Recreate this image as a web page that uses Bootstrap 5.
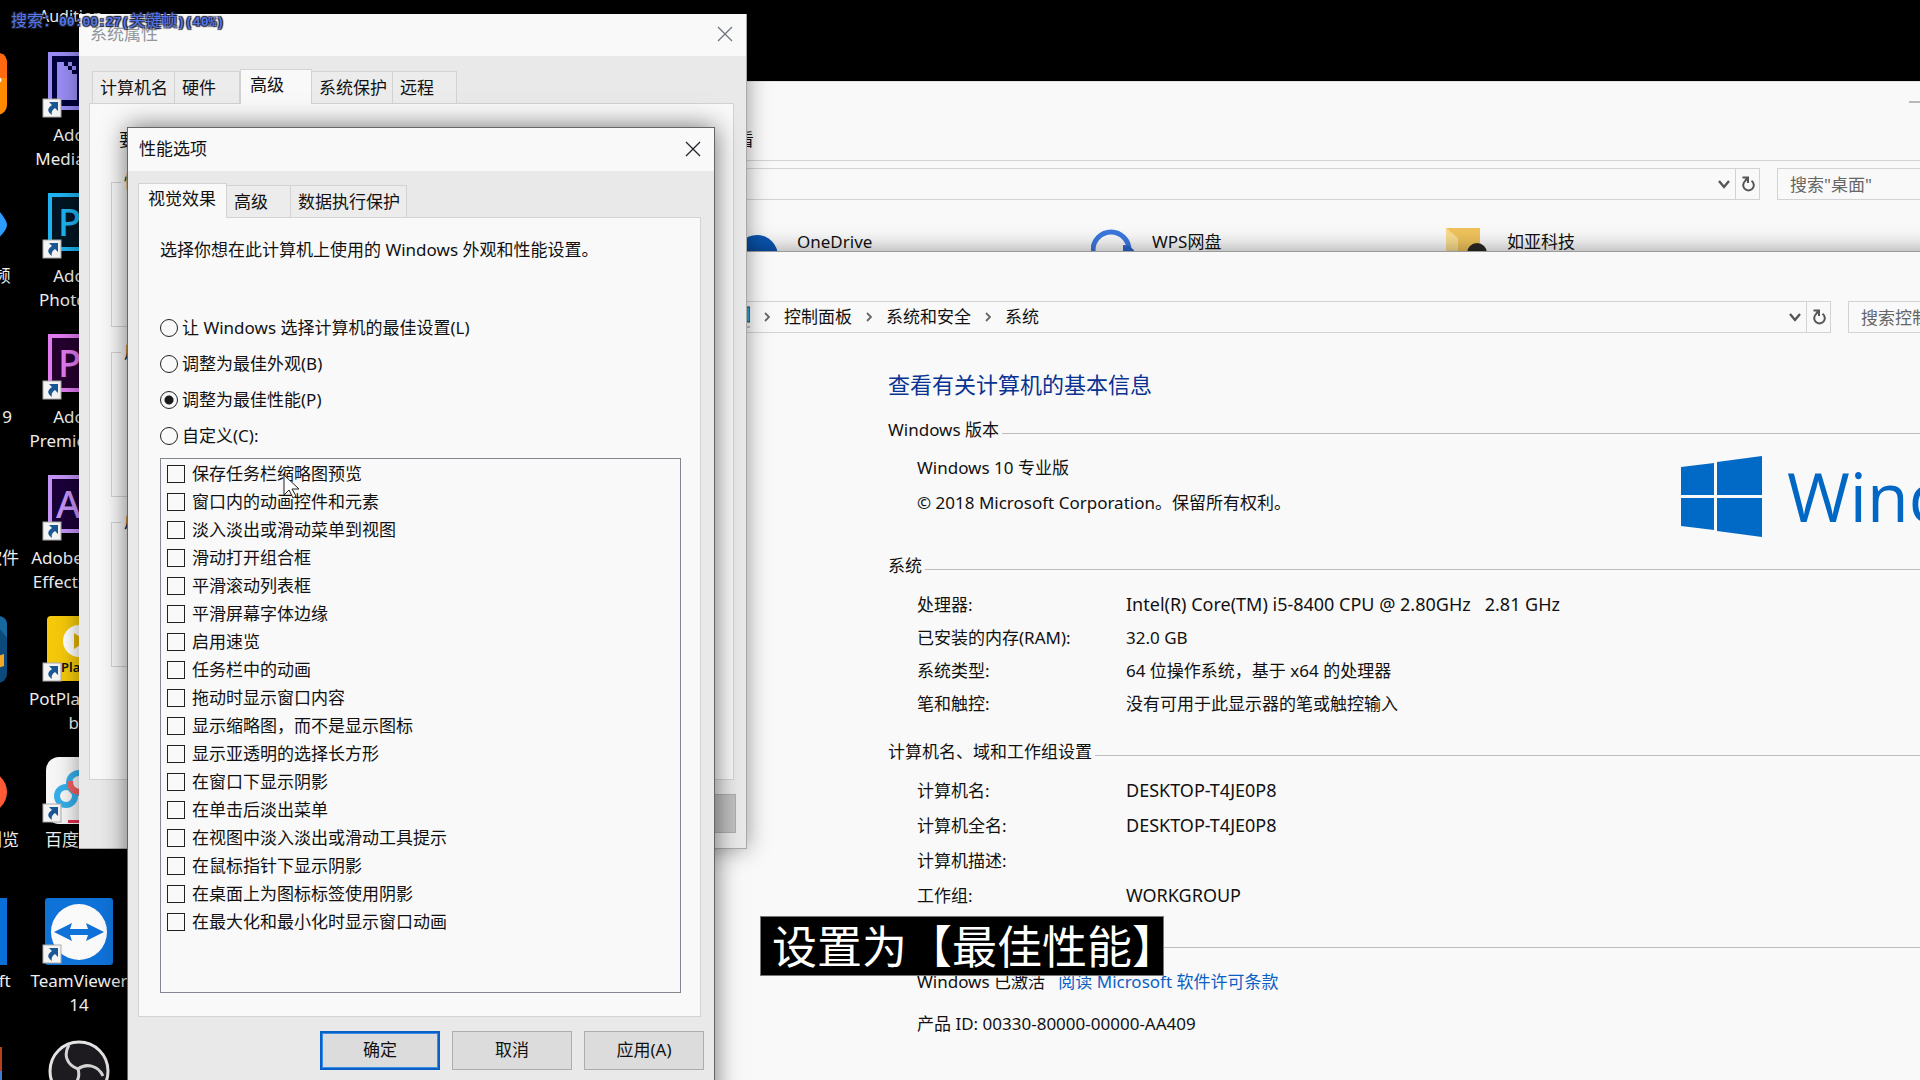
<!DOCTYPE html>
<html lang="zh-CN">
<head>
<meta charset="utf-8">
<meta name="viewport" content="width=device-width, initial-scale=1">
<title>性能选项</title>
<link href="https://cdn.jsdelivr.net/npm/bootstrap@5.3.0/dist/css/bootstrap.min.css" rel="stylesheet">
<style>
:root { --paper:#f9f9f9; --face:#e9e9e9; --edge:#d3d3d3; }
body { background:#000; color:#111; font-family:"Noto Sans","Noto Sans CJK SC",sans-serif; font-size:16px; line-height:24px; }
.cn { font-size:17px; }
.desktop { height:100vh; min-height:1080px; background:#000; }
.desktop svg { display:block; }
.win { position:absolute; background:var(--paper); box-shadow:0 0 22px rgba(0,0,0,.4); }
.win-explorer { left:560px; right:-120px; top:81px; height:220px; border-top:1px solid #e4e4e4; }
.win-system { left:560px; right:-120px; top:251px; bottom:-20px; border-top:1px solid #9a9a9a; }
.win-props { left:79px; top:14px; width:668px; height:835px; background:var(--face); border-right:1px solid #aaa; border-bottom:1px solid #aaa; }
.win-perf { left:127px; top:127px; width:588px; height:980px; background:var(--face); border:1px solid #666; box-shadow:0 0 24px rgba(0,0,0,.55); }
.titlebar { height:42px; background:var(--paper); padding:0 13px 2px 11px; }
.win-perf .titlebar { height:43px; }
.win button, .win input { font-family:inherit; }
.btn-x { border:0; background:none; padding:0; line-height:0; }

/* explorer chrome */
.ribbon { height:79px; border-bottom:1px solid var(--edge); padding:19px 117px 0 177px; }
.ribbon span { margin-top:27px; }
.addr { height:32px; border:1px solid var(--edge); }
.addr-tail { width:24px; border-left:1px solid var(--edge); height:30px; }
.addr-search { height:32px; border:1px solid var(--edge); background:var(--paper); border-radius:0; padding:0 12px; color:#666; font-size:17px; outline:0; }
.search-desktop { width:263px; }
.search-panel { width:192px; }
.addr-search::placeholder { color:#666; opacity:1; }
.addr-row { gap:17px; margin-top:7px; }
.win-system .addr-row { margin-top:49px; }
.drives { margin-top:28px; padding-left:176px; line-height:28px; }
.drive { width:355px; height:56px; gap:18px; }
.drive svg { flex:none; }
.crumbs { padding-left:169px; gap:14px; }

/* system page */
.info { padding:36px 0 0 328px; }
.info h1 { font-size:22px; line-height:30px; color:#0a3391; margin:0 0 19px; font-weight:400; }
.info p { margin:0; padding-left:29px; }
.sect { display:flex; align-items:center; gap:3px; height:24px; }
.sect::after { content:""; flex:1; height:1px; background:#bdbdbd; margin-top:7px; }
.edition { display:grid; gap:11px; margin:14px 0 39px; }
.activation { display:grid; gap:18px; margin-top:14px; }
.facts { padding-left:29px; display:grid; grid-template-columns:209px 1fr; }
.facts dt, .facts dd { font-weight:400; margin:0; }
.facts .latin { font-size:18px; }
.facts-a { grid-auto-rows:33px; line-height:33px; margin:10px 0 20px; }
.facts-b { grid-auto-rows:35px; line-height:35px; margin:9px 0 19px; }
.brand { position:absolute; left:1121px; top:204px; color:#0067c5; gap:25px; font-family:"Open Sans",sans-serif; font-size:68px; line-height:78px; white-space:nowrap; }
.brand span { height:80px; }
.info a { color:#0a5fc4; text-decoration:none; }

/* property sheets */
.tabs { flex-wrap:nowrap; align-items:flex-end; padding:13px 0 0 13px; }
.win-perf .tabs { padding:12px 0 0 10px; }
.tabs button { border:1px solid var(--edge); border-left-width:0; border-bottom:0; background:#ececec; font-size:17px; line-height:24px; padding:4px 0 3px 7px; text-align:left; color:#111; }
.tabs button:first-child { border-left-width:1px; }
.tabs button.on { background:var(--paper); border-left-width:1px; padding:3px 0 7px 9px; margin-bottom:-1px; position:relative; }
.sheet { background:var(--paper); border:1px solid var(--edge); }
.props-sheet { margin:0 12px 0 10px; height:677px; padding:24px 21px 0; }
.props-sheet p { margin:0 0 18px 8px; white-space:nowrap; overflow:hidden; }
.props-sheet fieldset { border:1px solid var(--edge); height:157px; margin:0 0 13px; }
.props-sheet legend { float:none; width:auto; font-size:17px; line-height:24px; padding:0 3px; margin:0 0 0 9px; }
.perf-sheet { margin:0 13px 0 10px; padding:20px 19px 23px 21px; }
.dlg-btns { gap:12px; padding:14px 10px 0 0; }
.dlg-btn { width:120px; height:39px; border:1px solid #adadad; border-radius:0; background:#dcdcdc; color:#111; font-size:17px; line-height:24px; padding:0 0 2px; }
.dlg-btn:disabled { background:#c0c0c0; color:#777; }
.dlg-btn.primary { border:2px solid #0a5fc4; box-shadow:inset 0 0 0 1px #3a8fe8; }
.opt { display:flex; align-items:center; gap:4px; height:36px; font-size:17px; margin:0; }
.opt input, .tick input { appearance:none; flex:none; width:18px; height:18px; margin:0; border:1px solid #222; background:var(--paper); }
.opt input { border-radius:50%; }
.opt input:checked { background:radial-gradient(circle,#1b1b1b 0 4px,var(--paper) 5px); }
.ticks { border:1px solid #828790; height:535px; padding:1px 0 0 6px; margin:4px 0 0; }
.tick { display:flex; align-items:center; gap:7px; height:28px; font-size:17px; margin:0; }

/* desktop shortcuts */
.shortcuts { position:absolute; left:29px; top:52px; width:100px; }
.shortcuts a, .shortcuts-edge a { display:block; height:141px; color:#eee; text-decoration:none; text-align:center; white-space:nowrap; line-height:24px; }
.shortcuts a svg { margin:0 0 4px 16px; }
.shortcuts-edge { position:absolute; left:-65px; top:52px; width:100px; }
.shortcuts-edge a svg { margin:0 0 4px 5px; }
.top-label { position:absolute; left:39px; top:4px; color:#eee; }
.osd { position:absolute; left:11px; top:7px; z-index:5; font:400 16px/24px "Noto Sans CJK SC",sans-serif; color:#5578ea; text-shadow:-1px -1px 1px #223,1px -1px 1px #223,-1px 1px 1px #223,1px 1px 1px #223; white-space:nowrap; }
.osd span { font-family:"Liberation Mono",monospace; font-size:13px; font-weight:700; }
.subtitle { position:absolute; left:760px; top:916px; width:404px; height:60px; border:1px solid #777; background:#000; color:#fff; font-size:45px; line-height:60px; padding-left:11px; white-space:nowrap; overflow:hidden; margin:0; z-index:4; }
.pointer { position:absolute; left:283px; top:471px; z-index:5; }
</style>
<script src="https://cdn.jsdelivr.net/npm/bootstrap@5.3.0/dist/js/bootstrap.bundle.min.js"></script>
</head>
<body>
<svg width="0" height="0" class="position-absolute" aria-hidden="true">
  <defs>
    <g id="lnk"><rect x="-2" y="47" width="18" height="18" fill="#f4f4f4" stroke="#aaa"/><path d="M4 50h9v9l-3-3c-3 2-4 4-3 7-5-3-5-7 0-10z" fill="#1c5795"/></g>
    <path id="cross" d="M1 1l14 14M15 1L1 15" stroke="currentColor" stroke-width="1.3" fill="none"/>
    <path id="down" d="M1 1l5 6 5-6" stroke="#555" stroke-width="2.4" fill="none"/>
    <path id="reload" d="M10.500 4.800A5.300 5.300 0 1 1 4.500 4.800M1.500 1.500h5.500v5.500M7 1.500L4 5" stroke="#555" stroke-width="2" fill="none"/>
    <path id="chev" d="M1 1l4 4-4 4" stroke="#666" stroke-width="1.8" fill="none"/>
  </defs>
</svg>
<main class="desktop position-relative overflow-hidden">

  <div class="top-label">Audition</div>
  <nav class="shortcuts-edge cn" aria-label="桌面左列">
    <a href="#"><svg width="67" height="67"><rect y="1" width="67" height="62" rx="10" fill="#ff8a00"/><path d="M0 1h57q10 0 10 10v15H0z" fill="#ff6a10"/><circle cx="59" cy="28" r="2.500" fill="#fff"/></svg></a>
    <a href="#"><svg width="67" height="67"><path d="M40 12h14q13 14 13 20t-13 17H40z" fill="#2e9bff"/></svg>看视频</a>
    <a href="#"><svg width="67" height="67"></svg>C 2019</a>
    <a href="#"><svg width="67" height="67"></svg>办公软件</a>
    <a href="#"><svg width="67" height="67"><rect width="67" height="67" rx="9" fill="#0c4a7c"/><path d="M50 0l17 22V9q0-9-9-9z" fill="#17689f"/><path d="M50 42l14-4v12l-14 4z" fill="#f5a623"/></svg></a>
    <a href="#"><svg width="67" height="67"><circle cx="46" cy="35" r="21" fill="#ff5a36"/></svg>安全浏览</a>
    <a href="#" class="pe-4"><svg width="67" height="67"><rect width="67" height="67" fill="#0b6fd8"/></svg>Microsoft</a>
    <a href="#"><svg width="62" height="67"><path d="M0 8h62v24H0z" fill="#b8401c"/><path d="M0 32h62v20H0z" fill="#3f7fd0"/></svg></a>
  </nav>
  <nav class="shortcuts cn" aria-label="桌面图标">
    <a href="#"><svg width="68" height="67" overflow="visible"><rect x="5" y="2" width="56" height="54" fill="#00003c" stroke="#9a8cf5" stroke-width="4"/><path d="M12 10h7v4h4v4h4v4h5v26H12z" fill="#9a8cf5"/><path d="M23 10h4v4h4v4h-4v-4h-4z" fill="#9a8cf5"/><use href="#lnk"/></svg>Adobe<br>Media En...</a>
    <a href="#"><svg width="68" height="67" overflow="visible"><rect x="5" y="2" width="56" height="54" fill="#001522" stroke="#1fb2f0" stroke-width="4"/><text x="13" y="43" font-size="38" font-weight="500" fill="#1fb2f0">Ps</text><use href="#lnk"/></svg>Adobe<br>Photosh...</a>
    <a href="#"><svg width="68" height="67" overflow="visible"><rect x="5" y="2" width="56" height="54" fill="#26002e" stroke="#e07bf0" stroke-width="4"/><text x="13" y="43" font-size="38" font-weight="500" fill="#e07bf0">Pr</text><use href="#lnk"/></svg>Adobe<br>Premiere P...</a>
    <a href="#"><svg width="68" height="67" overflow="visible"><rect x="5" y="2" width="56" height="54" fill="#1a0038" stroke="#c393f5" stroke-width="4"/><text x="11" y="43" font-size="38" font-weight="500" fill="#c393f5">Ae</text><use href="#lnk"/></svg>Adobe After<br>Effects CC ..</a>
    <a href="#"><svg width="68" height="67" overflow="visible"><rect x="2" y="0" width="65" height="65" rx="4" fill="#f5c90a"/><circle cx="34" cy="25" r="16" fill="#fff"/><path d="M29 17l12 8-12 8z" fill="#e0b400"/><text x="16" y="56" font-size="13" font-weight="600" fill="#111">Player</text><use href="#lnk"/></svg>PotPlayer 64<br>bit</a>
    <a href="#"><svg width="68" height="67" overflow="visible"><rect x="1" width="66" height="67" rx="13" fill="#f6f6f6"/><g fill="none" stroke-width="6"><circle cx="34" cy="26" r="10" stroke="#35aee8"/><circle cx="21" cy="39" r="9" stroke="#35aee8"/><path d="M25 24q0 11 11 11" stroke="#f06060"/></g><path d="M23 63h20v3H23z" fill="#e03050"/><use href="#lnk"/></svg>百度网盘</a>
    <a href="#"><svg width="68" height="67" overflow="visible"><rect x="0" width="68" height="67" rx="3" fill="#0f72d8"/><circle cx="34" cy="34" r="28" fill="#fafafa"/><path d="M9 34l18-9-2 6h18l-2-6 18 9-18 9 2-6H25l2 6z" fill="#0f72d8"/><use href="#lnk"/></svg>TeamViewer<br>14</a>
    <a href="#"><svg width="68" height="67" overflow="visible"><circle cx="34" cy="32" r="29" fill="#1d1b20" stroke="#e4e4e4" stroke-width="3"/><path d="M24 6c-6 10-2 20 9 24 8-6 20-4 25 7M33 30c3 10-3 18-12 20" fill="none" stroke="#d4d4d4" stroke-width="3"/></svg></a>
  </nav>

  <section class="win win-explorer" aria-label="桌面文件夹">
    <div class="ribbon cn d-flex justify-content-between align-items-start"><span>看</span><svg width="14" height="2"><path d="M0 1h14" stroke="#777"/></svg></div>
    <div class="addr-row d-flex">
      <div class="addr flex-grow-1 d-flex align-items-center justify-content-end"><svg class="me-1" width="13" height="9"><use href="#down"/></svg><div class="addr-tail d-flex align-items-center justify-content-center"><svg width="14" height="17"><use href="#reload"/></svg></div></div>
      <input class="addr-search search-desktop" type="search" aria-label="搜索桌面" placeholder='搜索"桌面"'>
    </div>
    <div class="drives d-flex cn">
      <div class="drive d-flex"><svg width="43" height="40"><circle cx="21" cy="28" r="21" fill="#0a57b5"/><path d="M0 44l34-16q9 0 9 16z" fill="#0f78d4"/></svg><span>OneDrive</span></div>
      <div class="drive d-flex"><svg width="43" height="40"><circle cx="20" cy="22" r="18" fill="none" stroke="#3b78dd" stroke-width="5"/><path d="M32 17q9 0 14 10H32z" fill="#2c66cc"/></svg><span>WPS网盘</span></div>
      <div class="drive d-flex"><svg width="43" height="40"><path d="M0 0h34v30H0z" fill="#efc35c"/><path d="M0 0l12 10v20H0z" fill="#f9dc8e"/><ellipse cx="31" cy="25" rx="10" ry="10" fill="#2b2926"/></svg><span>如亚科技</span></div>
    </div>
  </section>

  <section class="win win-system" aria-label="系统">
    <div class="addr-row d-flex">
      <div class="addr flex-grow-1 d-flex align-items-center cn">
        <div class="crumbs d-flex align-items-center">
          <svg width="20" height="22"><path d="M0 1h20v15H0z" fill="#30a5dc" stroke="#245" /><path d="M3 21h17" stroke="#889"/></svg>
          <svg width="6" height="10"><use href="#chev"/></svg><span>控制面板</span>
          <svg width="6" height="10"><use href="#chev"/></svg><span>系统和安全</span>
          <svg width="6" height="10"><use href="#chev"/></svg><span>系统</span>
        </div>
        <svg class="ms-auto me-1" width="13" height="9"><use href="#down"/></svg>
        <div class="addr-tail d-flex align-items-center justify-content-center"><svg width="14" height="17"><use href="#reload"/></svg></div>
      </div>
      <input class="addr-search search-panel" type="search" aria-label="搜索控制面板" placeholder="搜索控制面板">
    </div>
    <div class="info cn">
      <h1>查看有关计算机的基本信息</h1>
      <div class="sect">Windows 版本</div>
      <div class="edition">
        <p>Windows 10 专业版</p>
        <p>© 2018 Microsoft Corporation。保留所有权利。</p>
      </div>
      <div class="sect">系统</div>
      <dl class="facts facts-a">
        <dt>处理器:</dt><dd class="latin">Intel(R) Core(TM) i5-8400 CPU @ 2.80GHz &nbsp; 2.81 GHz</dd>
        <dt>已安装的内存(RAM):</dt><dd>32.0 GB</dd>
        <dt>系统类型:</dt><dd>64 位操作系统，基于 x64 的处理器</dd>
        <dt>笔和触控:</dt><dd>没有可用于此显示器的笔或触控输入</dd>
      </dl>
      <div class="sect">计算机名、域和工作组设置</div>
      <dl class="facts facts-b">
        <dt>计算机名:</dt><dd class="latin">DESKTOP-T4JE0P8</dd>
        <dt>计算机全名:</dt><dd class="latin">DESKTOP-T4JE0P8</dd>
        <dt>计算机描述:</dt><dd></dd>
        <dt>工作组:</dt><dd class="latin">WORKGROUP</dd>
      </dl>
      <div class="sect">Windows 激活</div>
      <div class="activation">
        <p>Windows 已激活 &nbsp; <a href="#">阅读 Microsoft 软件许可条款</a></p>
        <p>产品 ID: 00330-80000-00000-AA409</p>
      </div>
    </div>
    <div class="brand d-flex align-items-center">
      <svg width="81" height="81"><path d="M0 11L33 7v32H0zM36 6l45-6v39H36zM0 42h33v32L0 70zM36 42h45v39l-45-6z" fill="#006ac6"/></svg>
      <span>Windows 10</span>
    </div>
  </section>

  <section class="win win-props cn" aria-label="系统属性">
    <div class="titlebar d-flex align-items-center justify-content-between"><span class="text-secondary opacity-75">系统属性</span><button class="btn-x text-secondary" aria-label="关闭"><svg width="16" height="16"><use href="#cross"/></svg></button></div>
    <div class="tabs d-flex">
      <button style="width:83px">计算机名</button><button style="width:65px">硬件</button><button class="on" style="width:72px">高级</button><button style="width:81px">系统保护</button><button style="width:64px">远程</button>
    </div>
    <div class="sheet props-sheet">
      <p>要进行大多数更改，你必须作为管理员登录。</p>
      <fieldset><legend>性能</legend></fieldset>
      <fieldset><legend>用户配置文件</legend></fieldset>
      <fieldset><legend>启动和故障恢复</legend></fieldset>
    </div>
    <div class="dlg-btns d-flex justify-content-end">
      <button class="dlg-btn">确定</button><button class="dlg-btn">取消</button><button class="dlg-btn" disabled>应用(A)</button>
    </div>
  </section>

  <section class="win win-perf cn" role="dialog" aria-label="性能选项">
    <div class="titlebar d-flex align-items-center justify-content-between"><span>性能选项</span><button class="btn-x text-dark" aria-label="关闭"><svg width="16" height="16"><use href="#cross"/></svg></button></div>
    <div class="tabs d-flex">
      <button class="on" style="width:89px">视觉效果</button><button style="width:64px">高级</button><button style="width:116px">数据执行保护</button>
    </div>
    <form class="sheet perf-sheet">
      <p class="mb-5">选择你想在此计算机上使用的 Windows 外观和性能设置。</p>
      <label class="opt"><input type="radio" name="fx">让 Windows 选择计算机的最佳设置(L)</label>
      <label class="opt"><input type="radio" name="fx">调整为最佳外观(B)</label>
      <label class="opt"><input type="radio" name="fx" checked>调整为最佳性能(P)</label>
      <label class="opt"><input type="radio" name="fx">自定义(C):</label>
      <div class="ticks">
        <label class="tick"><input type="checkbox">保存任务栏缩略图预览</label>
        <label class="tick"><input type="checkbox">窗口内的动画控件和元素</label>
        <label class="tick"><input type="checkbox">淡入淡出或滑动菜单到视图</label>
        <label class="tick"><input type="checkbox">滑动打开组合框</label>
        <label class="tick"><input type="checkbox">平滑滚动列表框</label>
        <label class="tick"><input type="checkbox">平滑屏幕字体边缘</label>
        <label class="tick"><input type="checkbox">启用速览</label>
        <label class="tick"><input type="checkbox">任务栏中的动画</label>
        <label class="tick"><input type="checkbox">拖动时显示窗口内容</label>
        <label class="tick"><input type="checkbox">显示缩略图，而不是显示图标</label>
        <label class="tick"><input type="checkbox">显示亚透明的选择长方形</label>
        <label class="tick"><input type="checkbox">在窗口下显示阴影</label>
        <label class="tick"><input type="checkbox">在单击后淡出菜单</label>
        <label class="tick"><input type="checkbox">在视图中淡入淡出或滑动工具提示</label>
        <label class="tick"><input type="checkbox">在鼠标指针下显示阴影</label>
        <label class="tick"><input type="checkbox">在桌面上为图标标签使用阴影</label>
        <label class="tick"><input type="checkbox">在最大化和最小化时显示窗口动画</label>
      </div>
    </form>
    <div class="dlg-btns d-flex justify-content-end">
      <button class="dlg-btn primary">确定</button><button class="dlg-btn">取消</button><button class="dlg-btn">应用(A)</button>
    </div>
  </section>

  <div class="osd">搜索：<span>00:00:27(</span>关键帧<span>)(40%)</span></div>
  <svg class="pointer" width="18" height="28"><path d="M1 4v20l5-5 4 8 3-2-4-7h7z" fill="#fdfdfd" stroke="#222"/></svg>
  <p class="subtitle">设置为【最佳性能】</p>
</main>
</body>
</html>
